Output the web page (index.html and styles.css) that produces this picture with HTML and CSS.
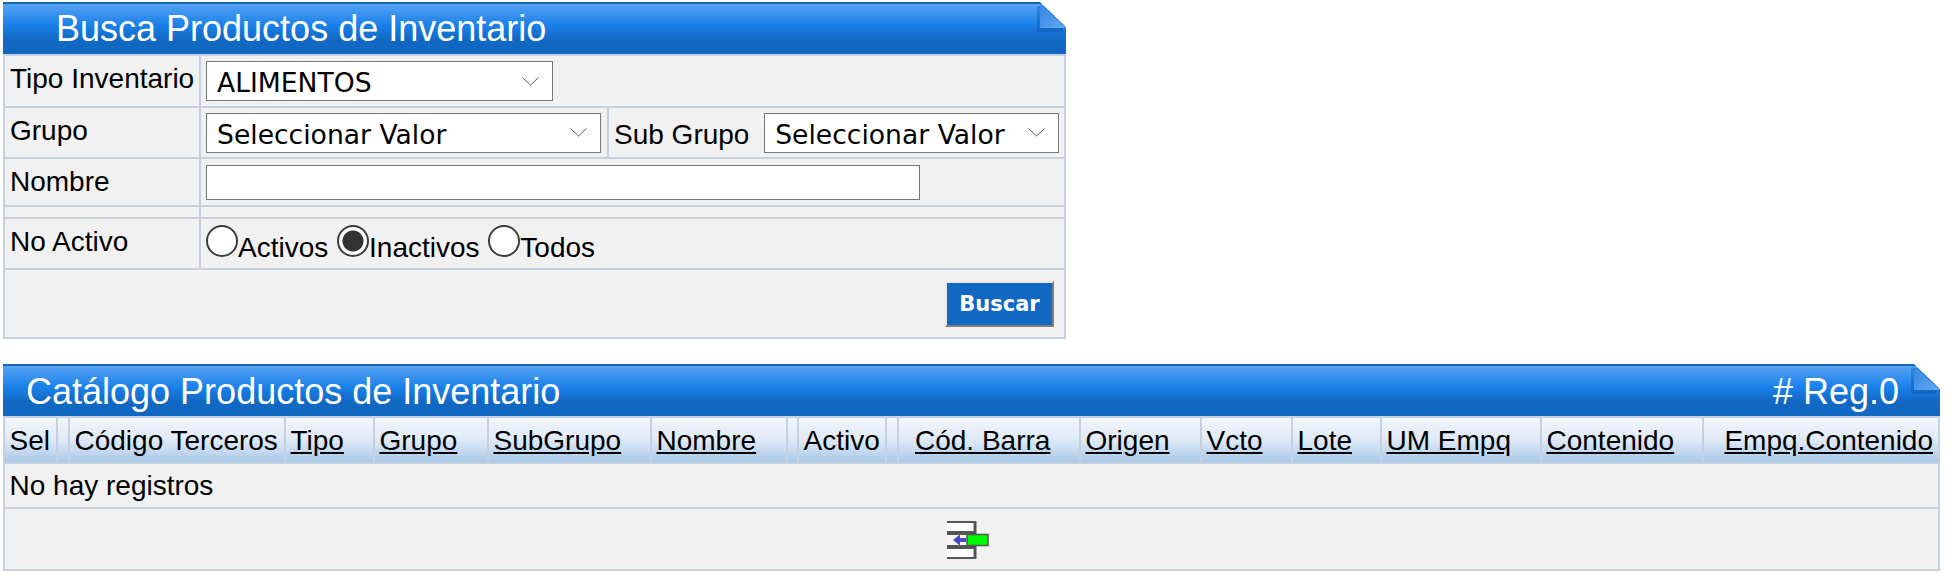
FILE: index.html
```html
<!doctype html>
<html lang="es">
    <head>
        <meta charset="UTF-8" />
        <title>Productos de Inventario</title>
        <link rel="stylesheet" href="styles.css">
    </head>
    <body>
        <section class="panel panel-search">
            <div class="panel-title title-search">
                <span>Busca Productos de Inventario</span>
                <svg class="fold" width="32" height="34" viewBox="0 0 32 34">
                    <defs>
                        <linearGradient id="foldSearch" x1="0" y1="0" x2="1" y2="1">
                            <stop offset="0" stop-color="#2f86e6" />
                            <stop offset="1" stop-color="#66aaf0" />
                        </linearGradient>
                    </defs>
                    <rect x="2" y="4" width="26" height="26" fill="#0b4f9c" opacity="0.35" />
                    <polygon points="5,2 5,26 31,26" fill="url(#foldSearch)" />
                    <polygon points="5,0 32,0 32,26" fill="#fff" />
                </svg>
            </div>
            <form>
                <table class="search-table">
                    <colgroup>
                        <col class="col-label" />
                        <col class="col-field" />
                        <col />
                    </colgroup>
                    <tr class="row-tipo">
                        <td class="label">Tipo Inventario</td>
                        <td colspan="2">
                            <select class="select select-tipo">
                                <option>ALIMENTOS</option>
                            </select>
                        </td>
                    </tr>
                    <tr class="row-grupo">
                        <td class="label">Grupo</td>
                        <td>
                            <select class="select select-grupo">
                                <option>Seleccionar Valor</option>
                            </select>
                        </td>
                        <td class="subgrupo">
                            <span class="sub-label">Sub Grupo</span>
                            <select class="select select-sub">
                                <option>Seleccionar Valor</option>
                            </select>
                        </td>
                    </tr>
                    <tr class="row-nombre">
                        <td class="label label-nombre">Nombre</td>
                        <td colspan="2"><input class="text-input" type="text" /></td>
                    </tr>
                    <tr class="row-empty">
                        <td></td>
                        <td colspan="2"></td>
                    </tr>
                    <tr class="row-activo">
                        <td class="label">No Activo</td>
                        <td colspan="2" class="radios">
                            <input type="radio" name="activo" /><span>Activos</span>
                            <input type="radio" name="activo" checked /><span>Inactivos</span>
                            <input type="radio" name="activo" /><span>Todos</span>
                        </td>
                    </tr>
                    <tr class="row-actions">
                        <td colspan="3"><button type="button" class="btn">Buscar</button></td>
                    </tr>
                </table>
            </form>
        </section>

        <section class="panel panel-catalog">
            <div class="panel-title title-catalog">
                <span>Catálogo Productos de Inventario</span>
                <span># Reg.0</span>
                <svg class="fold" width="32" height="34" viewBox="0 0 32 34">
                    <defs>
                        <linearGradient id="foldCatalog" x1="0" y1="0" x2="1" y2="1">
                            <stop offset="0" stop-color="#2f86e6" />
                            <stop offset="1" stop-color="#66aaf0" />
                        </linearGradient>
                    </defs>
                    <rect x="2" y="4" width="26" height="26" fill="#0b4f9c" opacity="0.35" />
                    <polygon points="5,2 5,26 31,26" fill="url(#foldCatalog)" />
                    <polygon points="5,0 32,0 32,26" fill="#fff" />
                </svg>
            </div>
            <table class="grid">
                <colgroup>
                    <col class="w53" /><col class="w12" /><col class="w216" /><col class="w89" />
                    <col class="w114" /><col class="w163" /><col class="w136" /><col class="w11" />
                    <col class="w88" /><col class="w12" /><col class="w182" /><col class="w121" />
                    <col class="w91" /><col class="w89" /><col class="w160" /><col class="w162" />
                    <col />
                </colgroup>
                <thead>
                    <tr>
                        <th>Sel</th>
                        <th></th>
                        <th>Código Terceros</th>
                        <th><a href="#">Tipo</a></th>
                        <th><a href="#">Grupo</a></th>
                        <th><a href="#">SubGrupo</a></th>
                        <th><a href="#">Nombre</a></th>
                        <th></th>
                        <th>Activo</th>
                        <th></th>
                        <th class="barra"><a href="#">Cód. Barra</a></th>
                        <th><a href="#">Origen</a></th>
                        <th><a href="#">Vcto</a></th>
                        <th><a href="#">Lote</a></th>
                        <th><a href="#">UM Empq</a></th>
                        <th><a href="#">Contenido</a></th>
                        <th class="right"><a href="#">Empq.Contenido</a></th>
                    </tr>
                </thead>
                <tbody>
                    <tr class="row-none">
                        <td colspan="17">No hay registros</td>
                    </tr>
                    <tr class="row-pager">
                        <td colspan="17">
                            <svg class="pager-icon" width="42" height="40" viewBox="0 0 42 40">
                                <path d="M0 2H28V12H0" fill="#fff" stroke="#555" stroke-width="2" />
                                <path d="M0 28H28V38H0" fill="#fff" stroke="#555" stroke-width="2" />
                                <path d="M0 14H28V26H0" fill="#f4f4f4" stroke="#555" stroke-width="2" />
                                <path d="M28 1V39" stroke="#555" stroke-width="3" />
                                <path d="M6 20L13 14.500V18H19V22H13V25.500Z" fill="#4a4ac0" />
                                <rect x="20" y="14.500" width="21" height="11" fill="#00f800" stroke="#555" stroke-width="1.500" />
                            </svg>
                        </td>
                    </tr>
                </tbody>
            </table>
        </section>
    </body>
</html>
```

FILE: styles.css
```css
* {
    box-sizing: border-box;
}

body {
    margin: 0;
    padding: 2px 3px 0;
    background: #ffffff;
    font-family: "Liberation Sans", Arial, sans-serif;
    font-size: 28px;
    color: #000000;
}

.panel {
    background: #f1f1f1;
}

.panel-search {
    width: 1063px;
}

.panel-catalog {
    width: 1937px;
    margin-top: 25px;
}

/* blue title bar */
.panel-title {
    position: relative;
    display: flex;
    justify-content: space-between;
    height: 52px;
    line-height: 50px;
    font-size: 36px;
    color: #ffffff;
    border-top: 2px solid #1566b8;
    background: linear-gradient(
        to bottom,
        #57a3f3 0%,
        #1a80ea 42%,
        #1168c2 72%,
        #1168c2 100%
    );
}

.title-search {
    padding-left: 53px;
}

.title-catalog {
    padding: 0 41px 0 23px;
    line-height: 52px;
}

.fold {
    position: absolute;
    top: -2px;
    right: -1px;
}

/* search form */
.search-table {
    width: 100%;
    table-layout: fixed;
    border-collapse: collapse;
}

.search-table td {
    border: 2px solid #c3d1e0;
    padding: 0 0 0 5px;
}

.col-label {
    width: 196px;
}

.col-field {
    width: 408px;
}

.row-tipo {
    height: 52px;
}

.row-grupo {
    height: 51px;
}

.row-nombre {
    height: 48px;
}

.row-empty {
    height: 12px;
}

.row-activo {
    height: 51px;
}

.row-actions {
    height: 69px;
}

.label {
    vertical-align: middle;
    padding-bottom: 4px !important;
}

.label-nombre {
    padding-bottom: 0 !important;
}

.select {
    appearance: none;
    height: 40px;
    padding: 3px 0 0 10px;
    border: 1px solid #767676;
    border-radius: 0;
    background: #ffffff url("data:image/svg+xml,%3Csvg xmlns='http://www.w3.org/2000/svg' width='17' height='9' viewBox='0 0 17 9'%3E%3Cpath d='M0.500 0.500L8.500 8L16.500 0.500' fill='none' stroke='%23555' stroke-width='1'/%3E%3C/svg%3E") no-repeat right 13px center;
    font-family: "DejaVu Sans", Verdana, sans-serif;
    font-size: 26.6px;
    color: #000000;
    vertical-align: middle;
}

.select-tipo {
    width: 347px;
}

.select-grupo {
    width: 395px;
}

.select-sub {
    width: 295px;
    margin-left: 7px;
}

.sub-label {
    display: inline-block;
    padding-top: 4px;
    vertical-align: middle;
}

.text-input {
    display: block;
    width: 714px;
    height: 35px;
    border: 1px solid #767676;
    background: #ffffff;
}

.subgrupo {
    white-space: nowrap;
}

.search-table .radios {
    padding-top: 2px;
}

.radios input {
    appearance: none;
    width: 32px;
    height: 32px;
    margin: 0;
    border: 2px solid #3b3b3b;
    border-radius: 50%;
    background: #ffffff;
}

.radios span + input {
    margin-left: 1px;
}

.radios input:checked {
    background: radial-gradient(circle, #333333 0, #333333 10px, #ffffff 11px);
}

.row-actions td {
    text-align: right;
    padding-right: 10px;
    vertical-align: middle;
}

.btn {
    width: 109px;
    height: 46px;
    padding: 0;
    border: 2px solid;
    border-color: #e8e8e8 #808080 #808080 #e8e8e8;
    background: #1168c2;
    font-family: "DejaVu Sans", Verdana, sans-serif;
    font-weight: bold;
    font-size: 21px;
    color: #ffffff;
}

/* catalog grid */
.grid {
    width: 100%;
    table-layout: fixed;
    border-collapse: collapse;
}

.grid th,
.grid td {
    border: 2px solid #c3d1e0;
    padding: 0 0 0 4.500px;
    font-weight: normal;
    text-align: left;
    white-space: nowrap;
    overflow: hidden;
}

.grid th {
    height: 46px;
    padding-top: 2px;
    background: linear-gradient(to bottom, #f2f6fc 0%, #dfe9f6 50%, #a9c8e8 100%);
}

.grid th.barra {
    padding-left: 6px;
    text-indent: 10px;
}

.grid th.right {
    text-align: right;
    padding: 2px 5px 0 0;
}

.grid a {
    color: #000000;
    text-decoration: underline;
}

.row-none td {
    height: 45px;
}

.row-pager td {
    height: 62px;
    padding-top: 2px;
    padding-right: 12px;
    text-align: center;
    vertical-align: middle;
}

.pager-icon {
    display: block;
    margin: 0 auto;
}

.w53 { width: 53px; }
.w12 { width: 12px; }
.w216 { width: 216px; }
.w89 { width: 89px; }
.w114 { width: 114px; }
.w163 { width: 163px; }
.w136 { width: 136px; }
.w11 { width: 11px; }
.w88 { width: 88px; }
.w182 { width: 182px; }
.w121 { width: 121px; }
.w91 { width: 91px; }
.w160 { width: 160px; }
.w162 { width: 162px; }
```
